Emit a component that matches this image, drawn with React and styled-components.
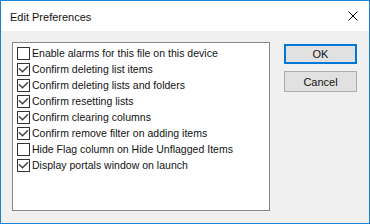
import React from 'react';
import styled, { createGlobalStyle } from 'styled-components';

const GlobalStyle = createGlobalStyle`
  html, body {
    margin: 0;
    padding: 0;
    background: #f0f0f0;
  }
  * {
    box-sizing: border-box;
  }
`;

const Window = styled.div`
  width: 370px;
  height: 224px;
  border: 1px solid #1883d7;
  background: #f0f0f0;
  display: flex;
  flex-direction: column;
  font-family: "Liberation Sans", Arial, sans-serif;
  color: #000;
`;

const TitleBar = styled.div`
  height: 30px;
  background: #fff;
  display: flex;
  align-items: center;
  justify-content: space-between;
  padding-left: 9px;
`;

const Title = styled.span`
  font-size: 11px;
  padding-top: 1px;
  color: #111;
`;

const CloseButton = styled.div`
  width: 46px;
  height: 30px;
  display: flex;
  align-items: center;
  justify-content: center;
  margin-right: -7px;
`;

const Body = styled.div`
  flex: 1;
  display: flex;
  padding: 11px 12px 0 11px;
  gap: 14px;
`;

const List = styled.div`
  width: 258px;
  height: 169px;
  border: 1px solid #828790;
  background: #fff;
  padding: 2px 0 0 4px;
`;

const Row = styled.label`
  display: flex;
  align-items: center;
  height: 16px;
  font-size: 10.5px;
  letter-spacing: 0.02px;
  white-space: nowrap;
  color: #111;
`;

const Box = styled.span`
  width: 13px;
  height: 13px;
  border: 1px solid #333;
  background: #fff;
  margin-right: 2px;
  position: relative;
  flex-shrink: 0;
  svg {
    display: block;
  }
`;

const Buttons = styled.div`
  display: flex;
  flex-direction: column;
  gap: 7px;
  padding-top: 2px;
`;

const Button = styled.button`
  width: 73px;
  height: ${p => (p.$default ? '20px' : '21px')};
  background: #e1e1e1;
  border: ${p => (p.$default ? '2px solid #0078d7' : '1px solid #adadad')};
  font-family: "Liberation Sans", Arial, sans-serif;
  font-size: 11px;
  color: #111;
  padding: 0;
  margin: 0;
`;

const prefs = [
  { label: 'Enable alarms for this file on this device', checked: false },
  { label: 'Confirm deleting list items', checked: true },
  { label: 'Confirm deleting lists and folders', checked: true },
  { label: 'Confirm resetting lists', checked: true },
  { label: 'Confirm clearing columns', checked: true },
  { label: 'Confirm remove filter on adding items', checked: true },
  { label: 'Hide Flag column on Hide Unflagged Items', checked: false },
  { label: 'Display portals window on launch', checked: true },
];

const Check = () => (
  <svg width="11" height="11" viewBox="0 0 11 11">
    <path d="M1 4.3 L4.5 7.8 L10 2.2" fill="none" stroke="#444" strokeWidth="1.5" />
  </svg>
);

const App = () => {
  return (
    <>
      <GlobalStyle />
      <Window>
        <TitleBar>
          <Title>Edit Preferences</Title>
          <CloseButton>
            <svg width="10" height="10" viewBox="0 0 10 10">
              <path d="M0.5 0.5 L9.5 9.5 M9.5 0.5 L0.5 9.5" stroke="#000" strokeWidth="1" />
            </svg>
          </CloseButton>
        </TitleBar>
        <Body>
          <List>
            {prefs.map((p, idx) => (
              <Row key={idx}>
                <Box>{p.checked && <Check />}</Box>
                {p.label}
              </Row>
            ))}
          </List>
          <Buttons>
            <Button $default>OK</Button>
            <Button>Cancel</Button>
          </Buttons>
        </Body>
      </Window>
    </>
  );
};

export default App;
